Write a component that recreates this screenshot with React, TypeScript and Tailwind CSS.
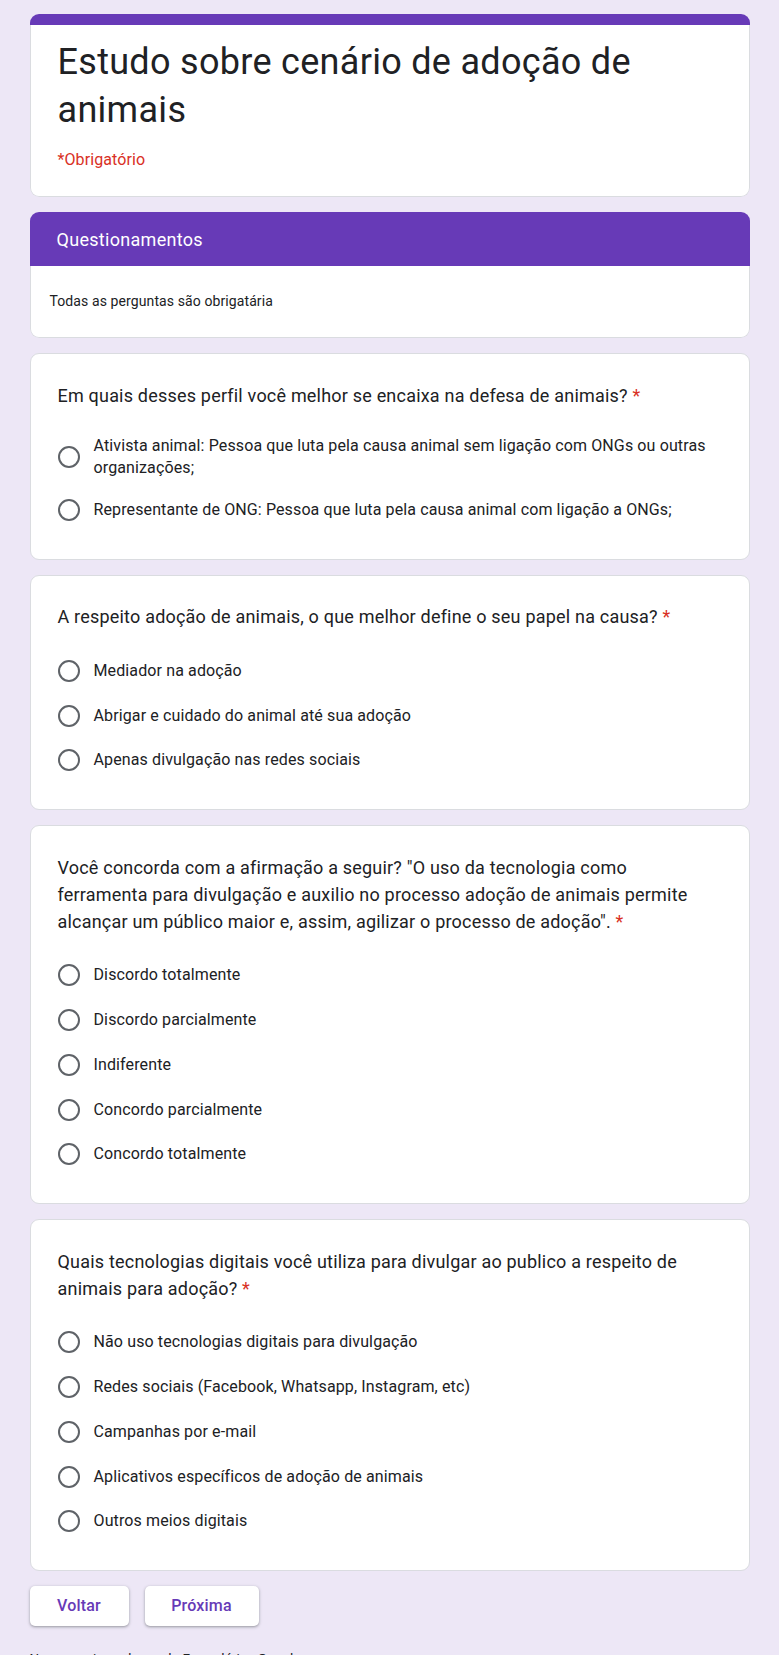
import React from 'react';

const PURPLE = '#673ab7';

interface Question {
  title: string;
  options: string[];
}

const questions: Question[] = [
  {
    title: 'Em quais desses perfil você melhor se encaixa na defesa de animais?',
    options: [
      'Ativista animal: Pessoa que luta pela causa animal sem ligação com ONGs ou outras organizações;',
      'Representante de ONG: Pessoa que luta pela causa animal com ligação a ONGs;',
    ],
  },
  {
    title: 'A respeito adoção de animais, o que melhor define o seu papel na causa?',
    options: ['Mediador na adoção', 'Abrigar e cuidado do animal até sua adoção', 'Apenas divulgação nas redes sociais'],
  },
  {
    title:
      'Você concorda com a afirmação a seguir? "O uso da tecnologia como ferramenta para divulgação e auxilio no processo adoção de animais permite alcançar um público maior e, assim, agilizar o processo de adoção".',
    options: [
      'Discordo totalmente',
      'Discordo parcialmente',
      'Indiferente',
      'Concordo parcialmente',
      'Concordo totalmente',
    ],
  },
  {
    title: 'Quais tecnologias digitais você utiliza para divulgar ao publico a respeito de animais para adoção?',
    options: [
      'Não uso tecnologias digitais para divulgação',
      'Redes sociais (Facebook, Whatsapp, Instagram, etc)',
      'Campanhas por e-mail',
      'Aplicativos específicos de adoção de animais',
      'Outros meios digitais',
    ],
  },
];

function Radio() {
  return <span className="block w-[22px] h-[22px] rounded-full border-2 border-[#5f6368] shrink-0" />;
}

function QuestionCard({ q }: { q: Question }) {
  return (
    <div className="bg-white rounded-[9px] border border-[#dadce0] px-[27px] pt-[27.5px] pb-[35px]">
      <div className="pr-[20px] text-[18px] leading-[27px] text-[#202124] tracking-[0.2px]">
        {q.title} <span className="text-[#d93025]">*</span>
      </div>
      <div className="mt-[26.5px] flex flex-col gap-[16.75px]">
        {q.options.map((opt) => (
          <div key={opt} className="flex items-center gap-[14px] min-h-[28px]">
            <Radio />
            <span className="text-[16px] leading-[22px] tracking-[0.12px] text-[#202124]">{opt}</span>
          </div>
        ))}
      </div>
    </div>
  );
}

export default function App() {
  return (
    <div className="min-h-screen bg-[#ede7f6] font-[Roboto,Arial,sans-serif] pb-10">
      <div className="w-[720px] mx-auto pt-[14px] flex flex-col gap-[15px]">
        {/* Form header */}
        <div className="rounded-[9px] overflow-hidden">
          <div className="h-[11px] bg-[#673ab7]" />
          <div className="bg-white border-x border-b border-[#dadce0] rounded-b-[9px] px-[27px] pt-[13px] pb-[24px]">
            <h1 className="text-[36px] leading-[48px] tracking-[0.3px] text-[#202124] font-normal">
              Estudo sobre cenário de adoção de animais
            </h1>
            <div className="mt-[14px] text-[16px] leading-[24px] tracking-[0.1px] text-[#d93025]">*Obrigatório</div>
          </div>
        </div>

        {/* Section */}
        <div className="rounded-[9px] overflow-hidden">
          <div className="h-[54px] bg-[#673ab7] flex items-center px-[27px] text-white text-[18px] tracking-[0.3px]">
            Questionamentos
          </div>
          <div className="h-[72px] bg-white border-x border-b border-[#dadce0] rounded-b-[9px] flex items-center pl-[19px] text-[14px] tracking-[0.1px] text-[#202124]">
            Todas as perguntas são obrigatária
          </div>
        </div>

        {questions.map((q) => (
          <QuestionCard key={q.title} q={q} />
        ))}

        <div className="flex gap-[16px]">
          <button className="w-[99px] h-[40px] bg-white rounded-[5px] shadow-[0_1px_2px_rgba(60,64,67,0.3),0_1px_3px_1px_rgba(60,64,67,0.15)] text-[16px] font-medium tracking-[0.2px]" style={{ color: PURPLE }}>
            Voltar
          </button>
          <button className="w-[114px] h-[40px] bg-white rounded-[5px] shadow-[0_1px_2px_rgba(60,64,67,0.3),0_1px_3px_1px_rgba(60,64,67,0.15)] text-[16px] font-medium tracking-[0.2px]" style={{ color: PURPLE }}>
            Próxima
          </button>
        </div>

        <div className="mt-[7px] text-[13.5px] leading-[20px] text-[#202124]">
          <p>Nunca envie senhas pelo Formulários Google.</p>
          <p className="mt-4 text-center text-[#5f6368]">
            Este conteúdo não foi criado nem aprovado pelo Google.
          </p>
        </div>
      </div>
    </div>
  );
}
